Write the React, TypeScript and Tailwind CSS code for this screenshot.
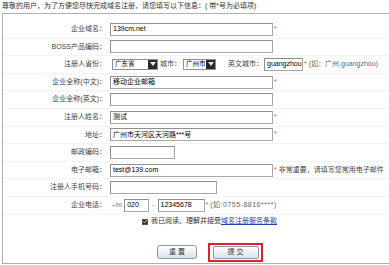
import React from "react";

const Star = () => <span className="text-[#e05050] text-[7px] leading-none self-start mt-[2px] ml-[1px]">*</span>;

function Input({ w, value }: { w: string; value?: string }) {
  return (
    <div className={`${w} h-[13px] border border-[#a7a7a7] border-t-[#8f8f8f] border-l-[#8f8f8f] bg-white flex items-center px-[2px] text-[7px] text-black whitespace-nowrap overflow-hidden`}>
      {value}
    </div>
  );
}

function Select({ w, value }: { w: string; value: string }) {
  return (
    <div className={`${w} h-[11px] border border-[#8f8f8f] bg-white flex items-center justify-between overflow-hidden`}>
      <span className="pl-[2px] text-[6.5px] text-black leading-none whitespace-nowrap">{value}</span>
      <span className="w-[9px] h-full shrink-0 bg-[#2a2a2a] flex items-center justify-center">
        <svg width="6" height="4" viewBox="0 0 6 4"><path d="M0 0 L6 0 L3 4 Z" fill="#e8e8e8" /></svg>
      </span>
    </div>
  );
}

function Row({ label, children }: { label: string; children: React.ReactNode }) {
  return (
    <div className="flex items-center h-[17.6px] border-b border-[#f3f3f3]">
      <div className="w-[103px] text-right text-[7px] text-[#444] whitespace-nowrap">{label}：</div>
      <div className="ml-[4px] flex items-center whitespace-nowrap">{children}</div>
    </div>
  );
}

export default function App() {
  return (
    <div
      className="w-[389px] h-[265px] bg-white overflow-hidden text-[#333]"
      style={{ fontFamily: '"Liberation Sans", "Noto Sans CJK SC", sans-serif' }}
    >
      <div className="h-[13px] flex items-center pl-[2px] text-[7px] text-[#333] whitespace-nowrap">
        尊敬的用户，为了方便您尽快完成域名注册，请您填写以下信息：( 带*号为必填项)
      </div>
      <div className="ml-[2px] w-[392px] h-[251px] border border-[#b0b0b0] flex flex-col pt-[7px]">
        <Row label="企业域名"><Input w="w-[163px]" value="139cm.net" /><Star /></Row>
        <Row label="BOSS产品编码"><Input w="w-[163px]" /></Row>
        <Row label="注册人省份">
          <div className="ml-[2px]"><Select w="w-[46px]" value="广东省" /></div>
          <span className="ml-[2px] text-[7px] text-[#444]">城市：</span>
          <div className="ml-[2px]"><Select w="w-[33px]" value="广州市" /></div>
          <span className="ml-[12px] text-[7px] text-[#444]">英文城市：</span>
          <div className="ml-[1px]"><Input w="w-[39px]" value="guangzhou" /></div>
          <Star />
          <span className="ml-[2px] text-[7px] text-[#666]">(如：广州,guangzhou)</span>
        </Row>
        <Row label="企业全称(中文)"><Input w="w-[163px]" value="移动企业邮箱" /><Star /></Row>
        <Row label="企业全称(英文)"><Input w="w-[163px]" /></Row>
        <Row label="注册人姓名"><Input w="w-[163px]" value="测试" /><Star /></Row>
        <Row label="地址"><Input w="w-[163px]" value="广州市天河区天河路***号" /><Star /></Row>
        <Row label="邮政编码"><Input w="w-[65px]" /></Row>
        <Row label="电子邮箱">
          <Input w="w-[163px]" value="test@139.com" />
          <Star />
          <span className="ml-[2px] text-[7px] text-[#444]">非常重要，请填写您常用电子邮件</span>
        </Row>
        <Row label="注册人手机号码"><Input w="w-[107px]" /></Row>
        <Row label="企业电话">
          <span className="ml-[2px] text-[6px] text-[#888]">+86</span>
          <div className="ml-[2px]"><Input w="w-[25px]" value="020" /></div>
          <span className="mx-[3px] text-[7px] text-[#666]">-</span>
          <Input w="w-[47px]" value="12345678" />
          <Star />
          <span className="ml-[2px] text-[7px] tracking-[0.5px] text-[#666]">(如:0755-8816****)</span>
        </Row>
        <div className="flex items-center h-[14px] pl-[139px]">
          <span className="w-[6px] h-[6px] bg-[#333] border border-[#555] flex items-center justify-center">
            <svg width="5" height="5" viewBox="0 0 5 5"><path d="M0.5 2.5 L2 4 L4.5 0.8" stroke="#fff" strokeWidth="0.9" fill="none" /></svg>
          </span>
          <span className="ml-[3px] text-[7px] text-[#333] whitespace-nowrap">
            我已阅读、理解并接受<a className="text-[#2440a8] underline">域名注册服务条款</a>
          </span>
        </div>
        <div className="flex items-center pl-[154px] mt-[14px]">
          <button className="w-[40px] h-[14px] rounded-[3px] border border-[#8a9aab] bg-gradient-to-b from-white to-[#d7e2ec] text-[7px] text-[#333] flex items-center justify-center">
            重 置
          </button>
          <div className="ml-[11px] w-[55px] h-[19px] border-2 border-[#e0202a] flex items-center justify-center">
            <button className="w-[46px] h-[13px] rounded-[2px] border border-[#8a9aab] bg-gradient-to-b from-white to-[#d7e2ec] text-[7px] text-[#333] flex items-center justify-center">
              提 交
            </button>
          </div>
        </div>
      </div>
    </div>
  );
}
